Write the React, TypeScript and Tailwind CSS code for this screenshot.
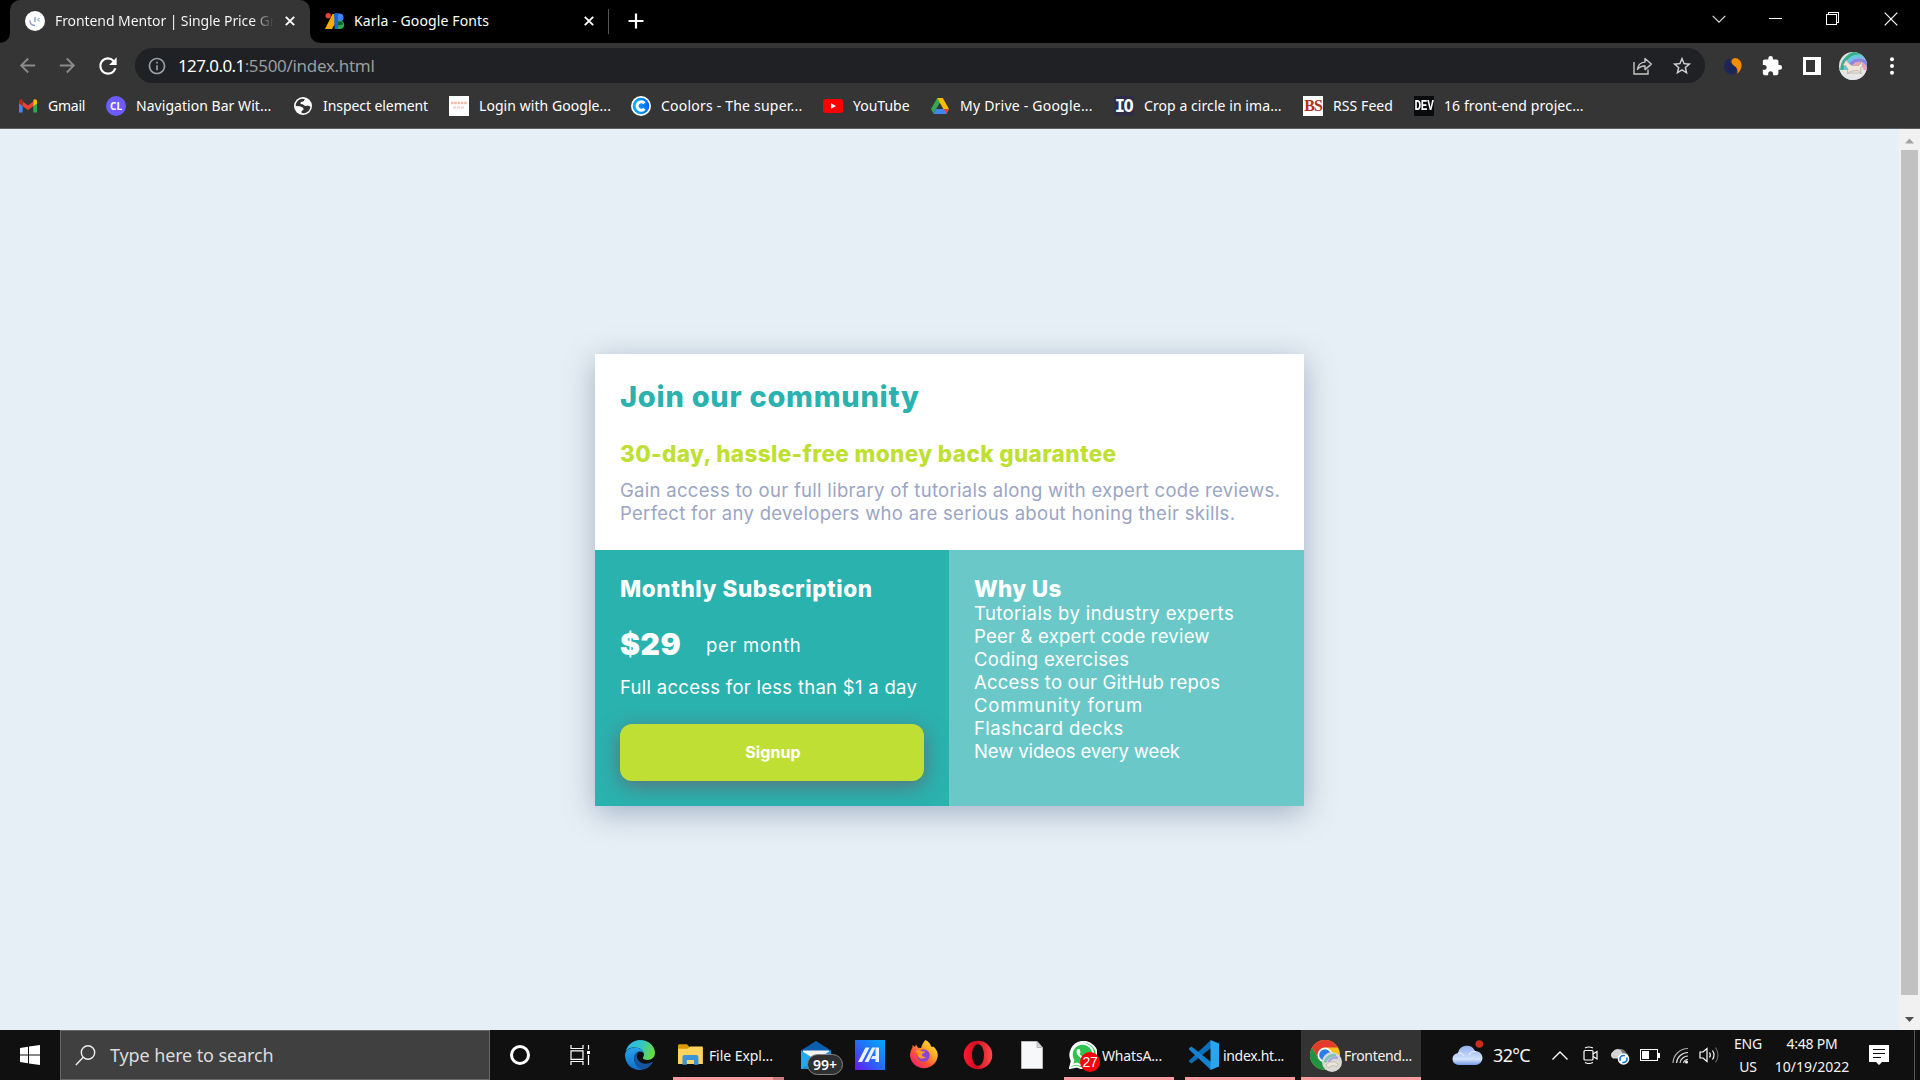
import React from 'react';
import { MdStarBorder, MdExtension, MdRefresh, MdArrowBack, MdArrowForward, MdInfoOutline } from 'react-icons/md';
import { FaWhatsapp } from 'react-icons/fa';

const UI = "font-['Noto_Sans','Open_Sans',sans-serif]";

/* ---------- tab strip ---------- */

function Close() {
  return (
    <svg width="10" height="10" viewBox="0 0 10 10" className="shrink-0" stroke="#fff" strokeWidth="1.9">
      <path d="M.8.8l8.4 8.4M9.2.8L.8 9.2" />
    </svg>
  );
}

function GoogleFontsIcon() {
  return (
    <svg width="20" height="20" viewBox="0 0 20 20" className="shrink-0">
      <path d="M7.500 3L0 18h7L12 9V3z" fill="#fbab00" />
      <path d="M10 2.500h4.500a4 4 0 010 8H10z" fill="#4285f4" />
      <path d="M9 2.500h4v15.500h-3.500z" fill="#1967d2" />
      <path d="M13 9.500h2a4.200 4.200 0 010 8.500h-2z" fill="#34a853" />
      <path d="M13 10.500l2 0a3 3 0 013 3l-5 1z" fill="#0d652d" />
      <circle cx="3.200" cy="4.700" r="2.700" fill="#ea4335" />
    </svg>
  );
}

function TabStrip() {
  return (
    <div className="flex h-[43px] bg-black text-[14px] text-white">
      <div className="flex w-[10px] items-end bg-[#353535]">
        <div className="h-[43px] w-[10px] rounded-br-[10px] bg-black" />
      </div>
      <div className="flex w-[300px] items-center rounded-t-[10px] bg-[#353535] pr-[15px] pb-[1px] pl-[15px]">
        <svg width="20" height="20" viewBox="0 0 20 20" className="shrink-0">
          <circle cx="10" cy="10" r="10" fill="#fff" />
          <path d="M5 9.500c0 3 2 5 5 5M10 6v5" fill="none" stroke="#8d93c8" strokeWidth="1.300" />
          <path d="M14.500 7l-2 1.700 2 1.800" fill="none" stroke="#8ccbd0" strokeWidth="1.100" />
        </svg>
        <div className="ml-[10px] w-[219px] overflow-hidden bg-linear-to-r from-white from-90% to-[#353535] bg-clip-text pb-[1px] tracking-[-0.08px] whitespace-nowrap text-transparent">
          Frontend Mentor | Single Price Gr
        </div>
        <div className="ml-[11px] flex"><Close /></div>
      </div>
      <div className="w-[10px] bg-[#353535]">
        <div className="h-[43px] w-[10px] rounded-bl-[10px] bg-black" />
      </div>
      <div className="flex w-[288px] items-center pb-[1px] pl-[5px]">
        <GoogleFontsIcon />
        <span className="ml-[9px] flex-1 pb-[1px] tracking-[0.120px] whitespace-nowrap">Karla - Google Fonts</span>
        <div className="mr-[14px] flex"><Close /></div>
      </div>
      <div className="mt-[9px] h-[25px] w-px bg-[#555]" />
      <svg width="16" height="16" viewBox="0 0 16 16" className="mt-[13px] ml-[19px]" stroke="#fff" strokeWidth="2.200">
        <path d="M8 .5v15M.5 8h15" />
      </svg>
      <div className="ml-auto flex h-[37px] items-center text-white">
        <svg width="14" height="8" viewBox="0 0 14 8" className="mr-[43px]" fill="none" stroke="#ddd" strokeWidth="1.200">
          <path d="M.7.8L7 7.100 13.300.8" />
        </svg>
        <div className="mr-[44px] h-px w-[13px] bg-white" />
        <svg width="14" height="14" viewBox="0 0 14 14" className="mr-[44px]" fill="none" stroke="#fff" shapeRendering="crispEdges">
          <path d="M.5 2.500h10v10H.5zM2.500 2.500v-2h10v10h-2" />
        </svg>
        <svg width="14" height="14" viewBox="0 0 14 14" className="mr-[22px]" stroke="#fff" strokeWidth="1.200">
          <path d="M.7.700l12.600 12.600M13.300.7L.7 13.300" />
        </svg>
      </div>
    </div>
  );
}

/* ---------- toolbar ---------- */

function Toolbar() {
  return (
    <div className="flex h-[45px] items-center bg-[#353535]">
      <MdArrowBack className="ml-[16px] text-[#8b8b8b]" size={23} />
      <MdArrowForward className="ml-[17px] text-[#8b8b8b]" size={23} />
      <MdRefresh className="ml-[16px] text-white" size={26} />
      <div className="ml-[14px] flex h-[35px] w-[1570px] items-center rounded-full bg-[#202124] pl-[12px]">
        <MdInfoOutline className="text-[#9aa0a6]" size={20} />
        <div className="ml-[11px] flex text-[17px] leading-[24px]">
          <span className="tracking-[-0.6px] text-white">127.0.0.1</span>
          <span className="tracking-[-0.31px] text-[#9a9c9f]">:5500/index.html</span>
        </div>
        <svg width="20" height="18" viewBox="0 0 20 18" className="mr-[1px] ml-auto" fill="none" stroke="#c6c6c6" strokeWidth="1.400">
          <path d="M1 5v12h14v-4.500" />
          <path d="M4.500 12.500C5 7.500 8 5.300 12 5.100V1.500l6.300 5.600L12 12.600V9C8.500 9 6 10 4.500 12.500z" strokeLinejoin="round" />
        </svg>
        <MdStarBorder className="mr-[12px] ml-[17px] text-[#d0d0d0]" size={22} />
      </div>
      <svg width="18" height="18" viewBox="0 0 18 18" className="ml-[19px]">
        <path d="M6.500 1.200A8.200 8.200 0 000 9c0 5 4 9 9 8.600 4-1 5-5 2.500-7.500C8 7.500 5.500 5.500 6.500 1.200z" fill="#1d2757" />
        <path d="M7.500 3.500C9 0 13 .2 15.500 3c3.500 4 2.500 10-2.300 13.700.8-4.500-.5-6-2.700-7.700C8.500 7.500 7 6 7.500 3.500z" fill="#f78c00" />
      </svg>
      <MdExtension className="ml-[19px] text-white" size={22} />
      <svg width="18" height="18" viewBox="0 0 18 18" className="ml-[20px]">
        <path d="M0 0h18v18H0zM3 3v12h9V3z" fill="#fff" fillRule="evenodd" />
      </svg>
      <svg width="28" height="28" viewBox="0 0 28 28" className="ml-[18px]">
        <clipPath id="face"><circle cx="14" cy="14" r="14" /></clipPath>
        <g clipPath="url(#face)">
          <path d="M0 0h28v28H0z" fill="#dfe0e2" />
          <g fill="none" strokeWidth="3.600">
            <circle cx="20" cy="18" r="17" stroke="#36b08a" />
            <circle cx="20" cy="18" r="13.500" stroke="#6cc5e0" />
            <circle cx="20" cy="18" r="10" stroke="#8a86e4" />
            <circle cx="20" cy="18" r="6.500" stroke="#e7a1b8" />
          </g>
          <path d="M0 18h28v10H0z" fill="#e6e6e6" />
          <path d="M7 8l3 3.500 3 2h7l3-4 .5 4-2 3 .5 5-3-3-6 .5-5 2.500 1-4.500-2.500-3.500-2.500 0z" fill="#f0e5d8" stroke="#b9a594" strokeWidth=".7" />
          <path d="M9 21h13" stroke="#bdb4ac" strokeWidth=".8" />
        </g>
      </svg>
      <svg width="4" height="18" viewBox="0 0 4 18" className="ml-[23px]" fill="#fff">
        <circle cx="2" cy="2.300" r="2" /><circle cx="2" cy="9" r="2" /><circle cx="2" cy="15.700" r="2" />
      </svg>
    </div>
  );
}

/* ---------- bookmarks ---------- */

const icons: Record<string, React.ReactNode> = {
  gmail: (
    <svg width="20" height="20" viewBox="0 0 20 20">
      <path d="M1 5v11.500h3.700V8z" fill="#4285f4" /><path d="M19 5v11.500h-3.700V8z" fill="#34a853" />
      <path d="M4.700 5.500L10 9.500l5.300-4v4.700L10 14.100l-5.300-3.900z" fill="#ea4335" />
      <path d="M1 5.500c0-2 2-2.800 3.700-1.500v6.200L1 7.500z" fill="#c5221f" />
      <path d="M19 5.500c0-2-2-2.800-3.700-1.500v6.200L19 7.500z" fill="#fbbc04" />
    </svg>
  ),
  cl: <div className="flex size-[20px] items-center justify-center rounded-full bg-[#6c5cff] text-[10px] font-bold tracking-normal text-white">CL</div>,
  globe: (
    <svg width="20" height="20" viewBox="0 0 20 20">
      <circle cx="10" cy="10" r="9" fill="#fff" />
      <path d="M8.500 2.700C5 3.500 2.700 6.500 2.700 10l4 .2 3.500 1.500.3 2-2 1.300.2 2.200c5 .8 8.600-2.700 8.700-6.700l-2.700-1-2.500.5-2.500-1.800L7.500 8l.3-2 3-.7 1-2.300z" fill="#333" />
      <path d="M11.500 5.500l4-.3 1.200 3.100-3.200 1.200-2-1.500zM4 12.500l3-.3 1.500 2.300-1.300 1.600z" fill="#fff" />
    </svg>
  ),
  login: (
    <svg width="20" height="20" viewBox="0 0 20 20">
      <path d="M0 0h20v20H0z" fill="#fff" />
      <path d="M2 7h16" stroke="#f5b9a6" strokeWidth="2.500" strokeDasharray="2.500 .8" />
      <path d="M4 11.500h11" stroke="#f8cfcb" strokeWidth="2" strokeDasharray="3 1" />
    </svg>
  ),
  coolors: (
    <svg width="20" height="20" viewBox="0 0 20 20">
      <defs><linearGradient id="cool"><stop stopColor="#00b8ff" /><stop offset="1" stopColor="#0562f6" /></linearGradient></defs>
      <circle cx="10" cy="10" r="10" fill="#fff" /><circle cx="10" cy="10" r="8.300" fill="url(#cool)" />
      <path d="M13.500 7.300a4.200 4.200 0 100 5.400" fill="none" stroke="#fff" strokeWidth="3" />
    </svg>
  ),
  youtube: (
    <svg width="20" height="20" viewBox="0 0 20 20">
      <rect y="3" width="20" height="14" rx="3" fill="#f00" /><path d="M8 7.200v5.600l5-2.800z" fill="#fff" />
    </svg>
  ),
  drive: (
    <svg width="20" height="20" viewBox="0 0 20 20">
      <path d="M7.200 2h5.600L6 13.200 3.700 18 1 13z" fill="#34a853" />
      <path d="M7.200 2h5.600l6.200 11h-5.600z" fill="#fbbc04" />
      <path d="M6.200 13H19l-2.700 5H3.700z" fill="#4285f4" /><path d="M14 13h5l-2.700 5z" fill="#ea4335" />
    </svg>
  ),
  io: (
    <div className="flex size-[20px] items-center justify-center rounded-[2px] bg-[#2f2c45] pr-px text-[17px] leading-[20px] text-white">
      <span className="font-['DejaVu_Sans_Mono','Liberation_Mono',monospace] font-bold tracking-[-1.5px]">IO</span>
    </div>
  ),
  bs: (
    <div className="flex size-[20px] items-center justify-center bg-white font-['Liberation_Serif',serif] text-[16px] font-bold tracking-[-1px] text-[#b3301a]">BS</div>
  ),
  dev: (
    <div className="flex size-[20px] items-center justify-center bg-[#090b0c] font-['Liberation_Mono',monospace] text-[11px] font-bold tracking-[-0.3px] text-white">
      <span className="scale-y-125">DEV</span>
    </div>
  ),
};

function Bookmark({ icon, label, className }: { icon: string; label: string; className: string }) {
  return (
    <div className={`flex shrink-0 items-center gap-[10px] whitespace-nowrap ${className}`}>
      <div className="size-[20px] shrink-0">{icons[icon]}</div>
      <span className="pb-[2px]">{label}</span>
    </div>
  );
}

function Bookmarks() {
  return (
    <div className="flex h-[41px] items-center border-b border-[#5f5f5f] bg-[#353535] pb-[4px] pl-[18px] text-[14px] text-white">
      <Bookmark icon="gmail" label="Gmail" className="w-[88px] tracking-[-0.25px]" />
      <Bookmark icon="cl" label="Navigation Bar Wit..." className="w-[187px] tracking-[0.040px]" />
      <Bookmark icon="globe" label="Inspect element" className="w-[156px] tracking-[-0.07px]" />
      <Bookmark icon="login" label="Login with Google..." className="w-[182px] tracking-[0.060px]" />
      <Bookmark icon="coolors" label="Coolors - The super..." className="w-[192px] tracking-[0.210px]" />
      <Bookmark icon="youtube" label="YouTube" className="w-[107px]" />
      <Bookmark icon="drive" label="My Drive - Google..." className="w-[184px] tracking-[0.220px]" />
      <Bookmark icon="io" label="Crop a circle in ima..." className="w-[189px] tracking-[0.070px]" />
      <Bookmark icon="bs" label="RSS Feed" className="w-[111px] tracking-[0.080px]" />
      <Bookmark icon="dev" label="16 front-end projec..." className="w-[170px] tracking-[0.100px]" />
    </div>
  );
}

/* ---------- page ---------- */

const reasons = [
  { text: 'Tutorials by industry experts', track: 'tracking-[0.4px]' },
  { text: 'Peer & expert code review', track: 'tracking-[0.22px]' },
  { text: 'Coding exercises', track: 'tracking-[0.29px]' },
  { text: 'Access to our GitHub repos', track: 'tracking-[0.2px]' },
  { text: 'Community forum', track: 'tracking-[0.8px]' },
  { text: 'Flashcard decks', track: 'tracking-[0.42px]' },
  { text: 'New videos every week', track: 'tracking-[-0.12px]' },
];

function PricingCard() {
  return (
    <div className="h-[452px] w-[709px] font-['Inter',sans-serif] text-[18.5px] leading-[23px] whitespace-nowrap shadow-[0_7px_29px_rgba(85,101,140,0.45)]">
      <div className="h-[196px] bg-white p-[25px]">
        <h1 className="text-[29px] leading-[35px] font-extrabold tracking-[0.72px] text-[#2ab2af]">Join our community</h1>
        <h2 className="mt-[25px] pt-[1px] text-[22.5px] leading-[27px] font-extrabold tracking-[0.38px] text-[#c0df34]">30-day, hassle-free money back guarantee</h2>
        <p className="mt-[12px] tracking-[0.3px] text-[#9aa5c3]">
          Gain access to our full library of tutorials along with expert code reviews.
          <br />
          Perfect for any developers who are serious about honing their skills.
        </p>
      </div>
      <div className="flex h-[256px] text-white">
        <div className="w-[354px] bg-[#2ab2af] p-[25px]">
          <h2 className="pt-[1px] text-[22.5px] leading-[25px] font-extrabold tracking-[0.57px]">Monthly Subscription</h2>
          <div className="mt-[26px] flex items-center gap-[25px]">
            <span className="w-[61px] text-[30px] leading-[35px] font-black tracking-[0.5px]">$29</span>
            <span className="pt-[1px] tracking-[0.66px]">per month</span>
          </div>
          <p className="mt-[14px] tracking-[0.28px]">Full access for less than $1 a day</p>
          <button className="mt-[25px] block h-[57px] w-[304px] rounded-[12px] bg-[#c0df34] pl-[2px] text-[16px] font-bold tracking-[0.100px] text-white shadow-[0_5px_20px_rgba(100,100,111,0.85)]">
            Signup
          </button>
        </div>
        <div className="w-[355px] bg-[#6ac9c8] p-[25px] pr-0">
          <h2 className="pt-[1px] text-[22.5px] leading-[25px] font-extrabold tracking-[0.3px]">Why Us</h2>
          <ul className="pt-[1px]">
            {reasons.map((r) => (
              <li key={r.text} className={r.track}>{r.text}</li>
            ))}
          </ul>
        </div>
      </div>
    </div>
  );
}

function Scrollbar() {
  return (
    <div className="flex w-[21px] flex-col items-center bg-[#f1f1f1]">
      <svg width="21" height="21" viewBox="0 0 21 21"><path d="M6 14.500l4.500-5 4.500 5z" fill="#a3a3a3" /></svg>
      <div className="h-[845px] w-[17px] bg-[#c1c1c1]" />
      <svg width="21" height="21" viewBox="0 0 21 21" className="mt-auto"><path d="M6 8l4.500 5 4.500-5z" fill="#505050" /></svg>
    </div>
  );
}

/* ---------- taskbar ---------- */

function Slot({ children, className = 'w-[54px]' }: { children: React.ReactNode; className?: string }) {
  return <div className={`flex h-[50px] shrink-0 items-center justify-center ${className}`}>{children}</div>;
}

function Running({ children, label, className }: { children: React.ReactNode; label: string; className: string }) {
  return (
    <div className={`flex h-[50px] shrink-0 items-center border-b-[3px] border-[#ff9a9f] pt-[3px] text-[14px] whitespace-nowrap text-[#f2f2f2] ${className}`}>
      {children}
      <span>{label}</span>
    </div>
  );
}

function EdgeIcon() {
  return (
    <svg width="30" height="30" viewBox="0 0 30 30">
      <defs>
        <linearGradient id="e1" x1="0" x2="1" y1=".2" y2=".5"><stop stopColor="#2cb5ee" /><stop offset=".5" stopColor="#34c6c5" /><stop offset="1" stopColor="#69dc3c" /></linearGradient>
        <linearGradient id="e2" x1="0" x2="0" y1="0" y2="1"><stop stopColor="#27a4ea" /><stop offset="1" stopColor="#0c6fcd" /></linearGradient>
      </defs>
      <path d="M.5 12A15 15 0 0115 0c8.500 0 15 6 15 12.800 0 4.500-3.300 7.200-7.500 7.200-3 0-4.700-1.200-4.700-2 0-.8 1.200-1.400 1.200-3.500C19 11 15.500 7.500 10 7.500S1.500 9.500.5 12z" fill="url(#e1)" />
      <path d="M0 15C0 10.500 4.500 7.500 10 7.500c5 0 8.600 3 9 6.500-1-2-2.700-2.700-4.500-2.400-4.200.8-6.200 4.900-5 9.400 1.200 4.500 4.500 7.500 8.500 8.700C8 31.500 0 24.500 0 15z" fill="url(#e2)" />
      <path d="M9.500 21c-1.200-4.500.8-8.600 5-9.400-3 2-3.200 5.400-1.500 8.200 3 4.500 9 5 14 2.200.6-.3 1 .1.700.6C25 27 21 30 17 29.500c-3.500-1-6.500-4-7.500-8.500z" fill="#17559f" />
    </svg>
  );
}

function FolderIcon() {
  return (
    <svg width="28" height="24" viewBox="0 0 28 24" className="mr-[6px]">
      <path d="M0 1.500Q0 0 1.500 0H10l3 3h13.500v6H0z" fill="#dd9a00" />
      <path d="M0 5h11l2.500-2.500H27q1 0 1 1V22H0z" fill="#ffd35c" />
      <path d="M5 23V14.500Q5 12 7.500 12h13q2.500 0 2.500 2.500V23h-5v-5.500h-8V23z" fill="#3f92d7" />
    </svg>
  );
}

function MailIcon() {
  return (
    <div className="relative h-[30px] w-[30px]">
      <svg width="30" height="30" viewBox="0 0 30 30">
        <path d="M0 10.500L15 1l15 9.500V29H0z" fill="#0a5fae" />
        <path d="M2 10.500h26v9H2z" fill="#f3f3f3" />
        <path d="M0 10.500L15 20l15-9.500V29H0z" fill="#27a8ea" /><path d="M0 29l15-9 15-9.500V29z" fill="#1c91da" />
      </svg>
      <div className="absolute top-[14px] left-[6px] flex h-[21px] w-[36px] items-center justify-center rounded-full border border-[#858585] bg-[#303030] text-[14px] font-semibold text-white">99+</div>
    </div>
  );
}

function AsusIcon() {
  return (
    <svg width="30" height="30" viewBox="0 0 30 30">
      <defs><linearGradient id="as" x1="0" x2="1" y1="1" y2="0"><stop stopColor="#6a16f5" /><stop offset=".5" stopColor="#256df7" /><stop offset="1" stopColor="#00adff" /></linearGradient></defs>
      <path d="M0 0h30v30H0z" fill="url(#as)" />
      <path d="M3 22L10.500 7.500h4L7 22zM9.500 22L17 7.500h3.500L13.500 22zM20.500 7.500H24V22h-3.500v-3H16l1.500-3h3z" fill="#e9f0ff" />
    </svg>
  );
}

function FirefoxIcon() {
  return (
    <svg width="30" height="30" viewBox="0 0 30 30">
      <defs>
        <linearGradient id="ff" x1="1" x2=".1" y1="0" y2="1"><stop stopColor="#fff04a" /><stop offset=".35" stopColor="#ffb028" /><stop offset=".65" stopColor="#ff5433" /><stop offset="1" stopColor="#e8157f" /></linearGradient>
      </defs>
      <path d="M16.500 0c4 2 5 4.500 5.500 6.500 1.500.5 2 .5 2.500 0 3 3 4.500 6 4.300 9.500A14 13.800 0 011 16c0-4.500 1.500-7 2.500-8.500V5l2.500 2 1-2.500 2 3.300 3 .2c1-3.500 2.500-6 4.500-8z" fill="url(#ff)" />
      <circle cx="14.500" cy="15.500" r="6.200" fill="#8a45d8" />
      <path d="M6.500 11c2-1.500 5-1 6.500.5l3-.3c-.3 2-2.500 2-3 3.200-.5 1.300 1.500 2.600 4 2.600-3 3-8.500 1.800-8.300-3z" fill="#ff9a24" />
    </svg>
  );
}

function OperaIcon() {
  return (
    <svg width="30" height="30" viewBox="0 0 30 30">
      <defs><linearGradient id="op"><stop stopColor="#ff1b2d" /><stop offset=".45" stopColor="#d00d20" /><stop offset="1" stopColor="#ff4b4b" /></linearGradient></defs>
      <path d="M15 .8a14.300 14.200 0 100 28.400A14.300 14.200 0 0015 .8zm0 3.400c3.400 0 6 4.600 6 10.800s-2.600 10.800-6 10.800S9 21.200 9 15s2.600-10.800 6-10.800z" fill="url(#op)" fillRule="evenodd" />
    </svg>
  );
}

function ChromeIcon() {
  return (
    <div className="relative mr-[4px] h-[30px] w-[30px]">
      <svg width="30" height="30" viewBox="0 0 30 30">
        <circle cx="15" cy="15" r="15" fill="#fbc116" />
        <path d="M2 7.500A15 15 0 0128 7.500H15L8.500 18.800z" fill="#e33b2e" />
        <path d="M2 7.500A15 15 0 0015 30l6.500-11.200L8.500 18.800z" fill="#229342" />
        <circle cx="15" cy="15" r="7.500" fill="#fff" /><circle cx="15" cy="15" r="5.800" fill="#2a7de9" />
      </svg>
      <svg width="20" height="20" viewBox="0 0 20 20" className="absolute top-[12px] left-[12px]">
        <circle cx="10" cy="10" r="10" fill="#d9d9d6" />
        <path d="M3 10.500a9 9 0 0111-7" fill="none" stroke="#7fc6b4" strokeWidth="3" />
        <path d="M6.500 10a8 8 0 019.500-4" fill="none" stroke="#a9a5e3" strokeWidth="2.500" />
        <path d="M4 13l3.500-3h5l3.500 2-1 2.500-4-1-5 2z" fill="#efe6da" stroke="#b5a99b" strokeWidth=".6" />
      </svg>
    </div>
  );
}

function Tray() {
  return (
    <div className="flex h-[50px] items-center text-[#f4f4f4]">
      <svg width="32" height="30" viewBox="0 0 32 30" className="ml-[31px]">
        <defs><linearGradient id="cl" x1="0" x2="0" y1="0" y2="1"><stop stopColor="#8fb1ee" /><stop offset=".7" stopColor="#d3e1fa" /><stop offset="1" stopColor="#6f9ae6" /></linearGradient></defs>
        <path d="M7 25a6 6 0 01-1-12 9 9 0 0117-2 7 7 0 011 14z" fill="url(#cl)" />
        <path d="M6 13c3-.5 5 1 6 3M17 15c1-3 4-4 7-3.500" fill="none" stroke="#f2f6ff" strokeWidth="1" />
        <circle cx="27.300" cy="4" r="3.800" fill="#d02a1e" />
      </svg>
      <span className="ml-[9px] w-[39px] pt-[1px] text-[18px] tracking-[-0.65px]">32°C</span>
      <svg width="16" height="9" viewBox="0 0 16 9" className="ml-[20px]" fill="none" stroke="#fff" strokeWidth="1.400"><path d="M.5 8.500L8 1l7.500 7.500" /></svg>
      <svg width="15" height="18" viewBox="0 0 15 18" className="ml-[15px]" fill="none" stroke="#fff" strokeWidth="1.200">
        <rect x="1" y="4.500" width="9" height="9.500" rx="1" /><path d="M10 8l4-2.500v7.500L10 10.500M2 2Q5.500 0 10 2M2 16.500Q5.500 18.500 10 16.500" />
      </svg>
      <svg width="21" height="19" viewBox="0 0 21 19" className="ml-[11px]">
        <path d="M6 6.500a6 6 0 0111 0c2 1 3 3 2 5.500H9z" fill="#777" />
        <path d="M4 12.500a4 4 0 010-7A5 5 0 0113 6l1 6.500z" fill="#d4d4d4" />
        <circle cx="14.500" cy="13" r="5.800" fill="#fff" /><circle cx="14.500" cy="13" r="3.500" fill="none" stroke="#0b74d1" strokeWidth="1.700" strokeDasharray="8.500 2.500" strokeDashoffset="2" />
      </svg>
      <svg width="20" height="12" viewBox="0 0 20 12" className="ml-[10px]" shapeRendering="crispEdges">
        <path d="M.5.500h17v11H.5z" fill="none" stroke="#fff" /><path d="M2 2h7v8H2zM18 3.500h1.500v5H18z" fill="#fff" />
      </svg>
      <svg width="17" height="17" viewBox="0 0 17 17" className="ml-[12px]" fill="none" stroke="#ddd" strokeWidth="1.200">
        <path d="M1 16A15 15 0 0116 1.500" stroke="#aaa" /><path d="M4.500 16A11.500 11.500 0 0116 5.500M8 16a8 8 0 018-7M11.500 16a4.500 4.500 0 014.500-3.500" />
        <circle cx="14.500" cy="15" r="1.500" fill="#fff" stroke="none" />
      </svg>
      <svg width="21" height="18" viewBox="0 0 21 18" className="ml-[10px]" fill="none" stroke="#fff" strokeWidth="1.200">
        <path d="M1 6h3l4-3.500v13L4 12H1z" /><path d="M10.500 6.500q1.700 2.500 0 5M13.500 4.500q3 4.500 0 9" /><path d="M16.500 1.500q5 7.500 0 15" stroke="#666" />
      </svg>
      <div className="ml-[13px] w-[30px] text-center text-[14px] leading-[23px] tracking-[-0.2px]">ENG<br />US</div>
      <div className="ml-[9px] w-[80px] text-center text-[14px] leading-[23px]"><span className="tracking-[-0.22px]">4:48 PM</span><br />10/19/2022</div>
      <svg width="20" height="20" viewBox="0 0 20 20" className="ml-[17px]" fill="#fff">
        <path d="M0 0h20v17h-7l-3 3-3-3H0z" /><path d="M4 4.500h12M4 8.500h12M4 12.500h8" stroke="#111" strokeWidth="1.200" />
      </svg>
      <div className="ml-[25px] h-[50px] w-px bg-[#5a5a5a]" />
    </div>
  );
}

function Taskbar() {
  return (
    <div className={`flex h-[50px] bg-[#101010] ${UI}`}>
      <Slot className="w-[60px]">
        <svg width="20" height="20" viewBox="0 0 20 20" fill="#fff"><path d="M0 3l8-1.200v7.700H0zM9 1.600L20 0v9.500H9zM0 10.500h8v7.700L0 17zM9 10.500h11V20L9 18.400z" /></svg>
      </Slot>
      <div className="flex h-[50px] w-[430px] shrink-0 items-center border border-[#686868] bg-[#404040] pl-[14px] text-[18px] tracking-[-0.12px] text-[#dcdcdc]">
        <svg width="21" height="21" viewBox="0 0 21 21" fill="none" stroke="#eee" strokeWidth="1.400"><circle cx="13" cy="7.500" r="6.700" /><path d="M8.300 12.200L.8 20" /></svg>
        <span className="ml-[14px]">Type here to search</span>
      </div>
      <Slot className="w-[60px]"><div className="size-[20px] rounded-full border-3 border-white" /></Slot>
      <Slot className="w-[60px]">
        <svg width="20" height="20" viewBox="0 0 20 20" fill="none" stroke="#fff" strokeWidth="1.200">
          <path d="M1 0v3.500h12V0M1 5.800h12v8.500H1zM1 20v-3.500h12V20M18.500 0v4.500M18.500 10v10" /><path d="M17 6h3v3h-3z" fill="#fff" stroke="none" />
        </svg>
      </Slot>
      <Slot className="w-[60px]"><EdgeIcon /></Slot>
      <div className="ml-[3px] flex w-[116px] shrink-0">
        <Running label="File Expl..." className="w-[100px] pl-[5px] tracking-[-0.05px]"><FolderIcon /></Running>
        <div className="h-[50px] w-[11px] border-b-[3px] border-[#cc7b80]" />
      </div>
      <Slot><MailIcon /></Slot>
      <Slot><AsusIcon /></Slot>
      <Slot><FirefoxIcon /></Slot>
      <Slot><OperaIcon /></Slot>
      <Slot>
        <svg width="22" height="28" viewBox="0 0 22 28"><path d="M.5.500H16l5.500 6V27.500H.5z" fill="#f7f8f9" stroke="#bbb" /><path d="M16 .5v6h5.500z" fill="#d5d8db" stroke="#aaa" strokeWidth=".8" /></svg>
      </Slot>
      <Running label="WhatsA..." className="ml-[5px] w-[110px] pl-[5px] tracking-[-0.17px]">
        <div className="relative mr-[5px] h-[28px] w-[28px]">
          <svg width="28" height="28" viewBox="0 0 28 28"><path d="M1 27l1.800-7A13.200 13.200 0 118 25.500z" fill="#2fc34f" stroke="#fff" strokeWidth="2" /></svg>
          <FaWhatsapp className="absolute top-0 left-0 text-white" size={27} />
          <div className="absolute top-[11px] left-[11px] flex size-[20px] items-center justify-center rounded-full bg-[#fb0007] font-['Liberation_Sans',sans-serif] text-[14px] tracking-[-0.3px] text-white">27</div>
        </div>
      </Running>
      <Running label="index.ht..." className="ml-[11px] w-[110px] pl-[4px] tracking-[-0.33px]">
        <svg width="30" height="30" viewBox="0 0 30 30" className="mr-[4px]">
          <path d="M22 0L0 20.500v1.300L2.500 23.500 22 8z" fill="#0a6fb8" />
          <path d="M22 30L0 9.500V8.200L2.500 6.500 22 22z" fill="#1482cf" />
          <path d="M21.500 0L30 3.500v23L21.500 30z" fill="#29a5ef" />
        </svg>
      </Running>
      <Running label="Frontend..." className="ml-[6px] w-[120px] bg-[#333] pl-[9px] tracking-[-0.31px]"><ChromeIcon /></Running>
      <Tray />
    </div>
  );
}

export default function App() {
  return (
    <div className={`flex h-[1080px] w-[1920px] flex-col overflow-hidden ${UI}`}>
      <TabStrip />
      <Toolbar />
      <Bookmarks />
      <div className="flex h-[901px]">
        <main className="flex flex-1 items-center justify-center bg-[#e6eff5] pt-[1px]">
          <PricingCard />
        </main>
        <Scrollbar />
      </div>
      <Taskbar />
    </div>
  );
}
